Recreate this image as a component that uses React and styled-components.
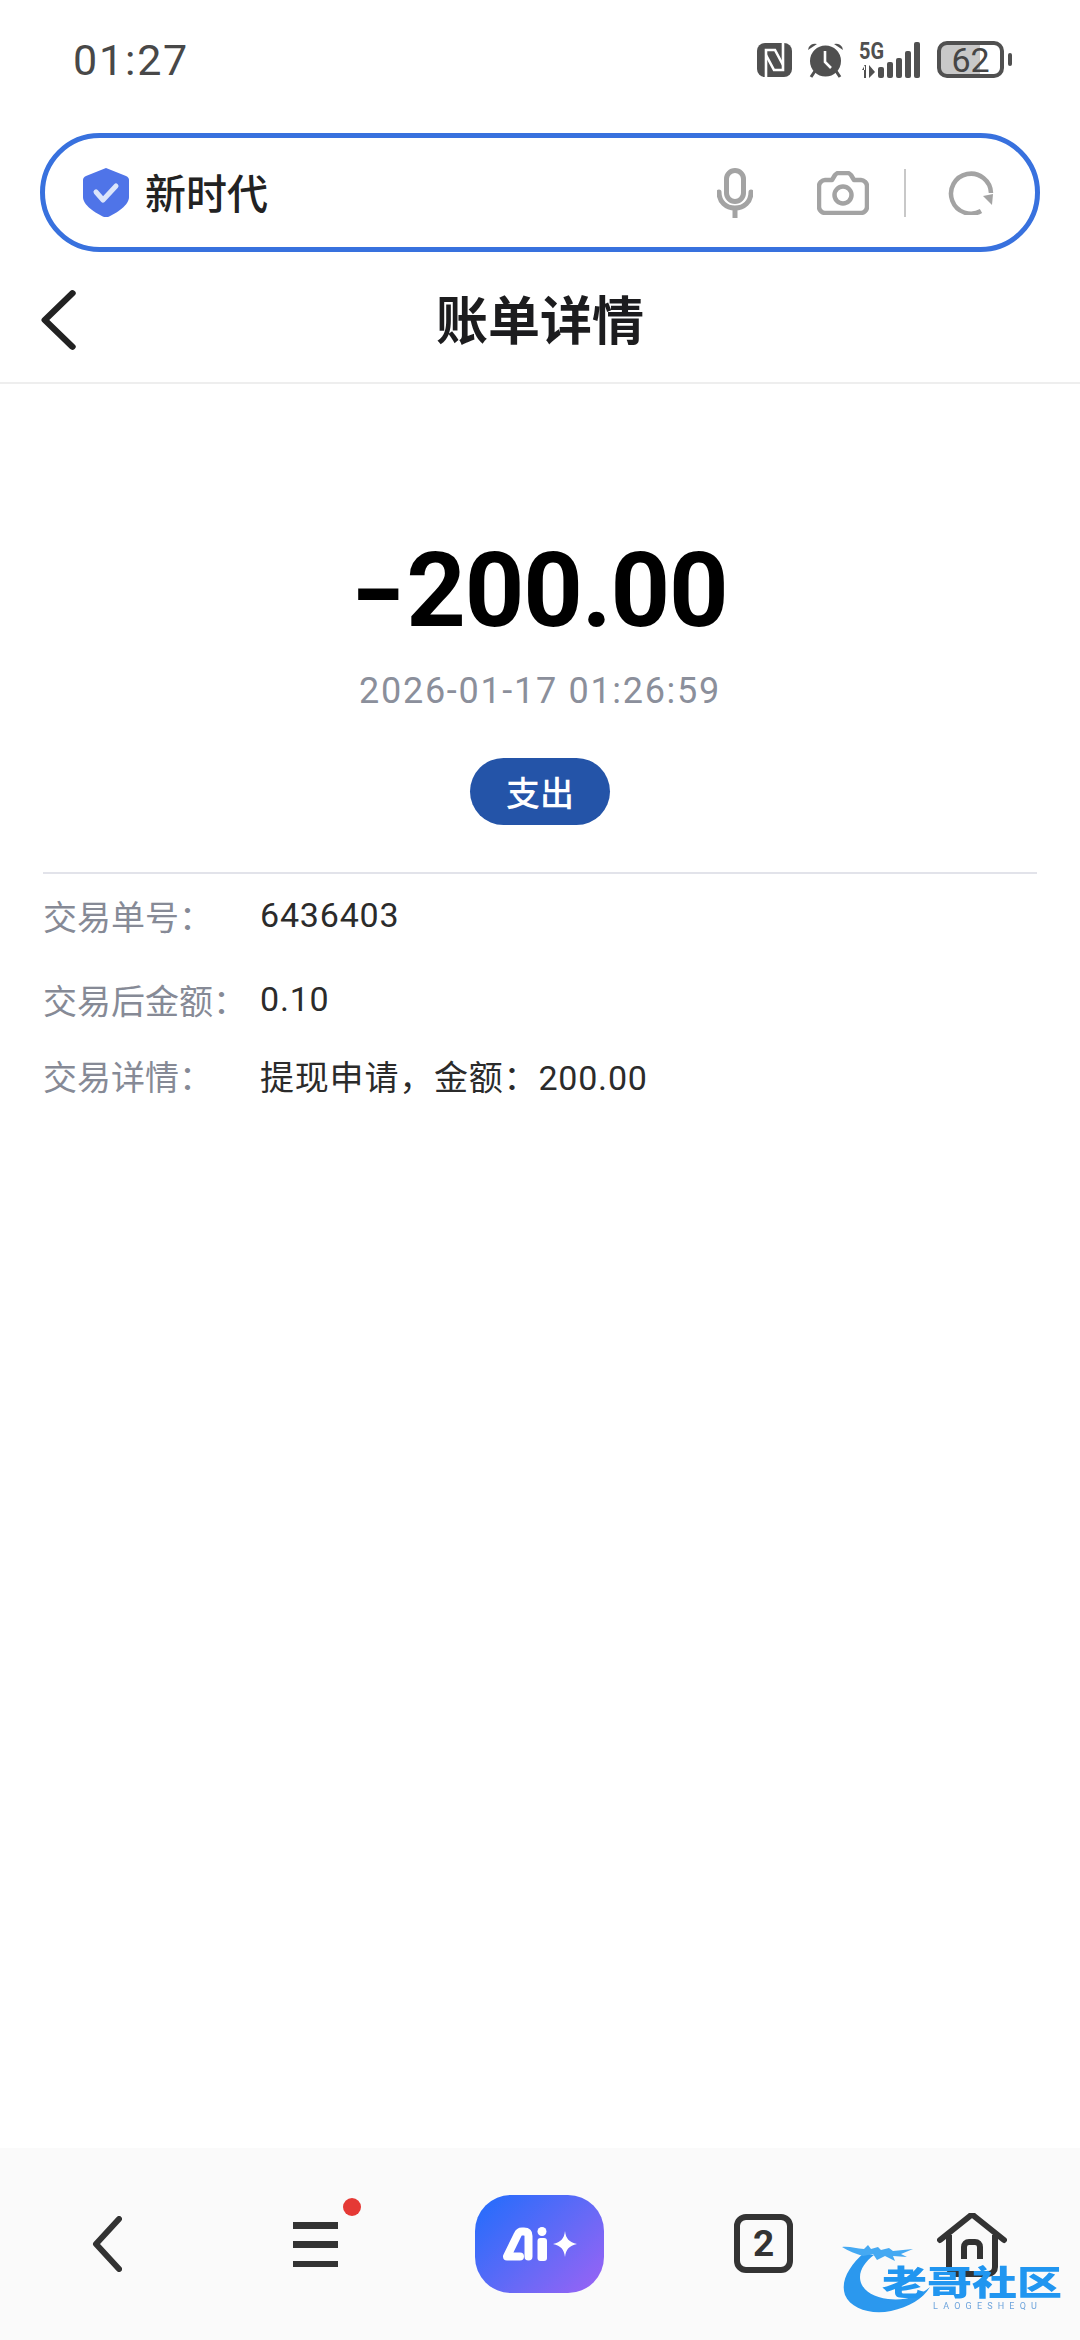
import styled, { createGlobalStyle } from "styled-components";

const GlobalStyle = createGlobalStyle`
  html, body {
    margin: 0;
    padding: 0;
    background: #fff;
  }
  * {
    box-sizing: border-box;
  }
`;

const Page = styled.div`
  position: relative;
  width: 1080px;
  height: 2340px;
  display: flex;
  flex-direction: column;
  overflow: hidden;
  background: #fff;
  font-family: Roboto, "Noto Sans CJK SC", sans-serif;
`;

const StatusBar = styled.div`
  height: 133px;
  flex: none;
  display: flex;
  justify-content: space-between;
  align-items: flex-start;
  padding: 41px 68px 0 73px;
`;

const Clock = styled.div`
  font-size: 43px;
  line-height: 38px;
  letter-spacing: 1.8px;
  color: #484848;
`;

const StatusIcons = styled.div`
  display: flex;
  align-items: center;
  height: 37px;
  gap: 15px;
`;

const Battery = styled.div`
  position: relative;
  width: 67px;
  height: 37px;
  border: 4px solid #505050;
  border-radius: 10px;
  overflow: hidden;
  display: flex;
  align-items: center;
  justify-content: center;
  font-size: 34px;
  color: #454545;
  background: linear-gradient(90deg, #c8c8c8 0 66%, #fff 66% 100%);
`;

const BatteryWrap = styled.div`
  display: flex;
  align-items: center;
  gap: 4px;
  margin-left: 1px;
`;

const BatteryNub = styled.div`
  width: 4px;
  height: 13px;
  border-radius: 2px;
  background: #505050;
`;

const SearchBar = styled.div`
  height: 119px;
  flex: none;
  margin: 0 40px;
  border: 5px solid #3871de;
  border-radius: 60px;
  display: flex;
  align-items: center;
  padding: 0 41px 0 38px;
`;

const SearchText = styled.div`
  margin: 0 0 4px 16px;
  font-size: 41px;
  font-weight: 500;
  color: #222;
  flex: 1;
`;

const SearchActions = styled.div`
  display: flex;
  align-items: center;
`;

const CameraSlot = styled.div`
  display: flex;
  margin-left: 64px;
`;

const ActionDivider = styled.div`
  width: 2px;
  height: 48px;
  margin: 0 42px 0 35px;
  background: #c8c8c8;
`;

const TitleBar = styled.div`
  height: 132px;
  flex: none;
  display: flex;
  align-items: center;
  justify-content: center;
  position: relative;
  border-bottom: 2px solid #eeeeee;
`;

const BackButton = styled.div`
  position: absolute;
  left: 40px;
  top: 38px;
  display: flex;
`;

const Title = styled.div`
  font-size: 52px;
  font-weight: 700;
  color: #1c1c1e;
`;

const Main = styled.main`
  flex: 1;
  display: flex;
  flex-direction: column;
`;

const Summary = styled.section`
  display: flex;
  flex-direction: column;
  align-items: center;
  margin: 0 43px;
  padding-top: 145px;
  border-bottom: 2px solid #e2e3ea;
  height: 490px;
`;

const Amount = styled.div`
  font-size: 104px;
  line-height: 124px;
  font-weight: 700;
  letter-spacing: -1.2px;
  color: #000;
`;

const AmountSign = styled.span`
  display: inline-block;
  margin: 0 8px 0 6px;
  transform: scaleX(1.4);
`;

const DateText = styled.div`
  margin-top: 18px;
  font-size: 36px;
  line-height: 40px;
  color: #8b8f9b;
  letter-spacing: 1.7px;
`;

const TypePill = styled.div`
  margin-top: 47px;
  width: 140px;
  height: 67px;
  border-radius: 34px;
  background: #2454a8;
  color: #fff;
  font-size: 34px;
  font-weight: 500;
  display: flex;
  align-items: center;
  justify-content: center;
`;

const Rows = styled.section`
  margin: 0 43px;
  display: flex;
  flex-direction: column;
`;

const Row = styled.div`
  height: ${({ $h }) => $h}px;
  display: flex;
  align-items: center;
  font-size: 34px;
`;

const RowLabel = styled.div`
  width: 217px;
  flex: none;
  color: #868a96;
`;

const RowValue = styled.div`
  color: #2b2b2b;
  letter-spacing: 0.8px;
`;

const BottomNav = styled.nav`
  height: 192px;
  flex: none;
  background: #fafafa;
  position: relative;
  display: grid;
  grid-template-columns: 200px 216px 212px 216px 236px;
  align-items: start;
  padding-top: 47px;
`;

const NavSlot = styled.div`
  display: flex;
  padding-top: ${({ $top }) => $top || 0}px;
  padding-left: ${({ $left }) => $left || 0}px;
`;

const Menu = styled.div`
  position: relative;
  width: 45px;
  height: 45px;
  margin-top: 27px;
  display: flex;
  flex-direction: column;
  justify-content: space-between;
`;

const MenuLine = styled.div`
  height: 6.5px;
  background: #333;
`;

const RedDot = styled.div`
  position: absolute;
  left: 50px;
  top: -24px;
  width: 18px;
  height: 18px;
  border-radius: 50%;
  background: #e53935;
`;

const AiButton = styled.div`
  width: 129px;
  height: 98px;
  border-radius: 36px;
  background: linear-gradient(135deg, #2c6cfb 10%, #6a69f6 60%, #9c62f5 100%);
  display: flex;
  align-items: center;
  justify-content: center;
`;

const TabCount = styled.div`
  width: 59px;
  height: 59px;
  border: 6px solid #333;
  border-radius: 12px;
  display: flex;
  align-items: center;
  justify-content: center;
  font-size: 37px;
  font-weight: 700;
  color: #333;
`;

const Watermark = styled.div`
  position: absolute;
  left: 842px;
  top: 2239px;
  width: 226px;
  height: 76px;
  filter: blur(0.7px);
`;

const WatermarkTitle = styled.div`
  position: absolute;
  left: 40px;
  top: 27px;
  font-size: 45px;
  line-height: 36px;
  font-weight: 900;
  white-space: nowrap;
  color: #2196f0;
  transform: scaleY(0.76);
`;

const WatermarkSub = styled.div`
  position: absolute;
  left: 91px;
  top: 62px;
  font-size: 9px;
  line-height: 11px;
  letter-spacing: 5.2px;
  color: #6ea4dc;
  white-space: nowrap;
`;

function NfcIcon() {
  return (
    <svg width="35" height="36" viewBox="0 0 35 36" fill="none">
      <rect x="0" y="1" width="35" height="34" rx="8" fill="#505050" />
      <path d="M9 36V8h9l8 15" stroke="#fff" strokeWidth="2.6" />
      <path d="M26 0v28h-9L9 13" stroke="#fff" strokeWidth="2.6" />
    </svg>
  );
}

function AlarmIcon() {
  return (
    <svg width="37" height="37" viewBox="0 0 37 37">
      <path d="M1 9a7 7 0 0 1 9-6zM36 9a7 7 0 0 0-9-6z" fill="#505050" />
      <path d="M8 30l-4 6M29 30l4 6" stroke="#505050" strokeWidth="3" />
      <circle cx="18.5" cy="20" r="15.5" fill="#505050" />
      <path d="M18 10v11l6 6" fill="none" stroke="#fff" strokeWidth="2.6" />
    </svg>
  );
}

function SignalIcon() {
  return (
    <svg width="62" height="38" viewBox="0 0 62 38" fill="#505050" overflow="visible">
      <text
        x="0"
        y="18"
        fontSize="23"
        fontWeight="700"
        fontFamily="Roboto, sans-serif"
        textLength="25"
        lengthAdjust="spacingAndGlyphs"
      >
        5G
      </text>
      <path d="M5 24v13h2V24zM3 29l3-5v5zM10 24v13l6-6z" />
      <rect x="19" y="26" width="6" height="11" rx="2" />
      <rect x="28" y="21" width="6" height="16" rx="2" />
      <rect x="37" y="17" width="6" height="20" rx="2" />
      <rect x="46" y="10" width="6" height="27" rx="2" />
      <rect x="55" y="1" width="6" height="36" rx="2" />
    </svg>
  );
}

function ShieldIcon() {
  return (
    <svg width="46" height="49" viewBox="0 0 46 49">
      <path
        d="M23 0l20 8c2 1 3 2 3 4v17c0 8-12 16-21 20h-4C12 45 0 37 0 29V12c0-2 1-3 3-4z"
        fill="#4f74e8"
      />
      <path d="M13 24l7 8 13-14" fill="none" stroke="#dbe5fb" strokeWidth="5" strokeLinecap="round" strokeLinejoin="round" />
    </svg>
  );
}

function MicIcon() {
  return (
    <svg width="36" height="50" viewBox="0 0 36 50" fill="none" stroke="#a3a3a3" strokeWidth="5">
      <rect x="9.5" y="2.5" width="17" height="31" rx="8.5" />
      <path d="M2 24c0 10 7 16 16 16s16-6 16-16" strokeLinecap="round" />
      <path d="M18 40v10" />
    </svg>
  );
}

function CameraIcon() {
  return (
    <svg width="52" height="44" viewBox="0 0 52 44" fill="none" stroke="#a3a3a3" strokeWidth="4.5">
      <path
        d="M8 9h7l3-5c1-1 2-2 3-2h10c1 0 2 1 3 2l3 5h7c3 0 6 3 6 6v21c0 3-3 6-6 6H8c-3 0-6-3-6-6V15c0-3 3-6 6-6z"
        strokeLinejoin="round"
      />
      <circle cx="26" cy="24" r="8.5" />
    </svg>
  );
}

function RefreshIcon() {
  return (
    <svg width="46" height="44" viewBox="0 0 46 44" fill="none">
      <path d="M33 40a20 20 0 1 1 10-18" stroke="#a3a3a3" strokeWidth="4.5" />
      <path d="M35 25l10-2-1 11z" fill="#a3a3a3" />
    </svg>
  );
}

function Chevron({ width, height, color, stroke }) {
  return (
    <svg width={width} height={height} viewBox="0 0 30 56" fill="none" preserveAspectRatio="none">
      <path d="M27 3L4 28l23 25" stroke={color} strokeWidth={stroke} strokeLinecap="round" strokeLinejoin="round" />
    </svg>
  );
}

function AiMark() {
  return (
    <svg width="74" height="34" viewBox="0 0 74 34" fill="none">
      <path d="M17 29.5H4L14.5 8Q16 4.500 19 4.500H21Q25.500 4.500 25.500 9V29.500" stroke="#fff" strokeWidth="8" strokeLinejoin="round" strokeLinecap="round" />
      <circle cx="39" cy="4.500" r="4.500" fill="#fff" />
      <rect x="34.500" y="11" width="9.500" height="23" rx="3" fill="#fff" />
      <path d="M62 4c1 8 4 11 12 13-8 2-11 5-12 13-1-8-4-11-12-13 8-2 11-5 12-13z" fill="#fff" />
    </svg>
  );
}

function HomeIcon() {
  return (
    <svg width="70" height="64" viewBox="0 0 70 64" fill="none" stroke="#333" strokeWidth="6">
      <path d="M3 27L33 3c1-1 3-1 4 0l30 24" strokeLinecap="round" strokeLinejoin="round" />
      <path d="M12 22v32c0 4 3 7 7 7h32c4 0 7-3 7-7V22" />
      <path d="M27 46V34c0-3 2-5 5-5h6c3 0 5 2 5 5v12" />
    </svg>
  );
}

function WatermarkSwoosh() {
  return (
    <svg width="226" height="76" viewBox="0 0 226 76">
      <path
        d="M22 14C8 26-2 42 3 56c6 14 26 20 46 16 18-4 32-12 39-24-12 10-26 14-42 12-16-2-28-10-28-22 0-8 6-16 14-22z"
        fill="#2b98ee"
      />
      <path
        d="M0 8c8-1 14 2 22 2l4-4 3 4 7-2 3 3 8-2 4 3 20-2-12 5 6 3-14-1 2 5-10-5-8 4-4-6-10 2C14 15 6 12 0 8z"
        fill="#45a9f2"
      />
    </svg>
  );
}

const rows = [
  { h: 82, label: "交易单号\uFF1A", value: "6436403" },
  { h: 86, label: "交易后金额\uFF1A", value: "0.10" },
  { h: 66, label: "交易详情\uFF1A", value: "提现申请\uFF0C金额\uFF1A200.00" },
];

export default function App() {
  return (
    <Page>
      <GlobalStyle />
      <StatusBar>
        <Clock>01:27</Clock>
        <StatusIcons>
          <NfcIcon />
          <AlarmIcon />
          <SignalIcon />
          <BatteryWrap>
            <Battery>62</Battery>
            <BatteryNub />
          </BatteryWrap>
        </StatusIcons>
      </StatusBar>

      <SearchBar>
        <ShieldIcon />
        <SearchText>新时代</SearchText>
        <SearchActions>
          <MicIcon />
          <CameraSlot>
            <CameraIcon />
          </CameraSlot>
          <ActionDivider />
          <RefreshIcon />
        </SearchActions>
      </SearchBar>

      <TitleBar>
        <BackButton>
          <Chevron width={36} height={60} color="#222" stroke={5.5} />
        </BackButton>
        <Title>账单详情</Title>
      </TitleBar>

      <Main>
        <Summary>
          <Amount>
            <AmountSign>-</AmountSign>200.00
          </Amount>
          <DateText>2026-01-17 01:26:59</DateText>
          <TypePill>支出</TypePill>
        </Summary>
        <Rows>
          {rows.map((row) => (
            <Row key={row.label} $h={row.h}>
              <RowLabel>{row.label}</RowLabel>
              <RowValue>{row.value}</RowValue>
            </Row>
          ))}
        </Rows>
      </Main>

      <BottomNav>
        <NavSlot $left={92} $top={21}>
          <Chevron width={30} height={56} color="#333" stroke={6} />
        </NavSlot>
        <NavSlot $left={93}>
          <Menu>
            <MenuLine />
            <MenuLine />
            <MenuLine />
            <RedDot />
          </Menu>
        </NavSlot>
        <NavSlot $left={59}>
          <AiButton>
            <AiMark />
          </AiButton>
        </NavSlot>
        <NavSlot $left={106} $top={19}>
          <TabCount>2</TabCount>
        </NavSlot>
        <NavSlot $left={93} $top={18}>
          <HomeIcon />
        </NavSlot>
      </BottomNav>

      <Watermark>
        <WatermarkSwoosh />
        <WatermarkTitle>老哥社区</WatermarkTitle>
        <WatermarkSub>LAOGESHEQU</WatermarkSub>
      </Watermark>
    </Page>
  );
}
